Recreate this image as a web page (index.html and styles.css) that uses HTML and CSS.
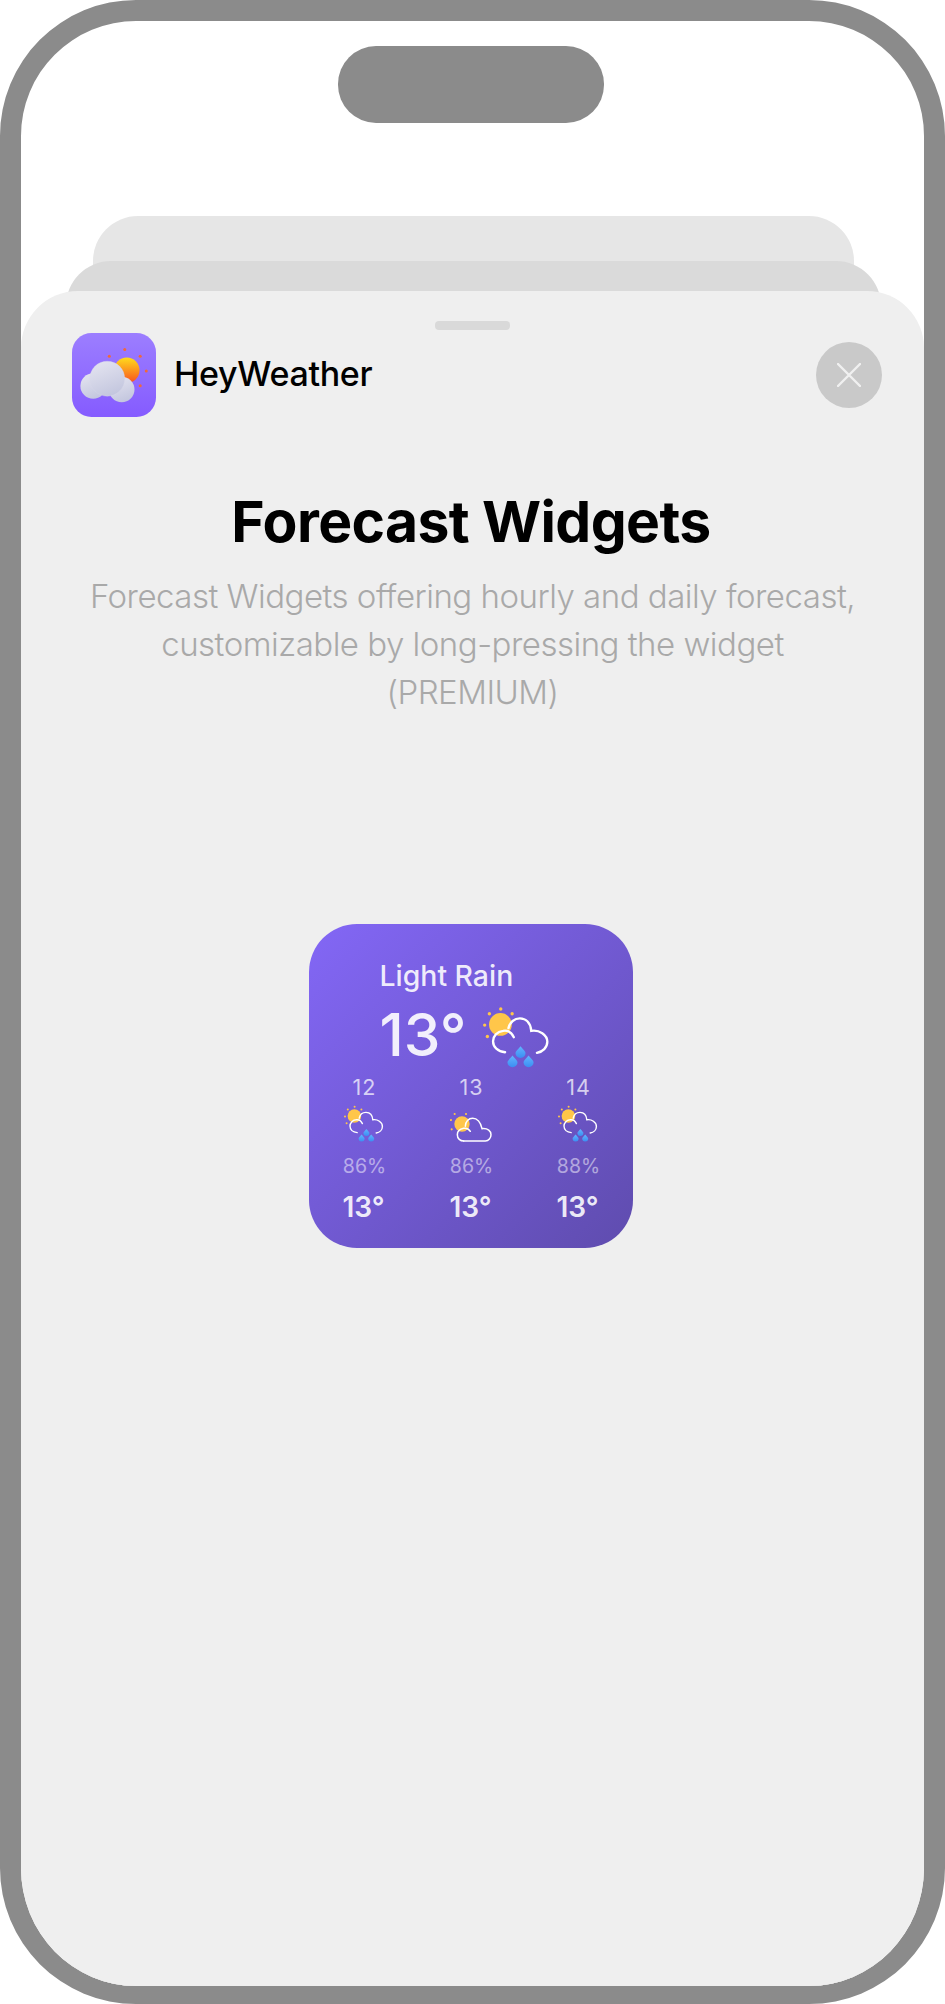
FILE: index.html
```html
<!DOCTYPE html>
<html lang="en">
<head>
<meta charset="utf-8">
<title>HeyWeather</title>
<link rel="stylesheet" href="styles.css">
</head>
<body>
<svg class="defs" width="0" height="0" aria-hidden="true">
  <defs>
    <linearGradient id="drop" x1="0" y1="0" x2="0" y2="1"><stop offset="0" stop-color="#62b4ff"/><stop offset="1" stop-color="#3b8df2"/></linearGradient>
    <linearGradient id="appbg" x1="0" y1="0" x2="0" y2="1"><stop offset="0" stop-color="#9c7eff"/><stop offset="1" stop-color="#855bff"/></linearGradient>
    <linearGradient id="appsun" x1="0" y1="0" x2="0" y2="1"><stop offset="0" stop-color="#ffdc1c"/><stop offset="1" stop-color="#f9501f"/></linearGradient>
    <linearGradient id="appcloud" x1="0.2" y1="0" x2="0.6" y2="1"><stop offset="0" stop-color="#e4e4f0"/><stop offset="1" stop-color="#c3c6de"/></linearGradient>
    <symbol id="rain" viewBox="40 50 200 185">
      <circle cx="92" cy="105" r="34" fill="#ffc64a"/>
      <g fill="#ffc64a"><circle cx="59" cy="73" r="5"/><circle cx="93" cy="59" r="5"/><circle cx="127" cy="73" r="5"/><circle cx="45" cy="107" r="5"/><circle cx="53" cy="141" r="5"/></g>
      <g fill="none" stroke="#fff" stroke-width="7" stroke-linecap="round">
        <path d="M132 143C125 128 112 122 100 124C82 126 70 140 70 155C70 172 84 186 106 188"/>
        <path d="M116 116C120 98 134 87 150 87C168 87 182 100 184 124C208 120 232 136 232 157C232 174 218 187 201 190"/>
      </g>
      <g fill="url(#drop)">
        <path d="M152 170C160 180 167 186 167 190A15 15 0 0 1 137 190C137 186 144 180 152 170Z"/>
        <path d="M128 198C136 208 143 214 143 218A15 15 0 0 1 113 218C113 214 120 208 128 198Z"/>
        <path d="M176 198C184 208 191 214 191 218A15 15 0 0 1 161 218C161 214 168 208 176 198Z"/>
      </g>
    </symbol>
    <symbol id="cloudy" viewBox="14 32 126 90">
      <circle cx="50" cy="68" r="23" fill="#ffc64a"/>
      <g fill="#ffc64a"><circle cx="28" cy="38" r="3.2"/><circle cx="62" cy="38" r="3.2"/><circle cx="17" cy="56" r="3.2"/><circle cx="19" cy="84" r="3.2"/></g>
      <g fill="none" stroke="#fff" stroke-width="4.5" stroke-linecap="round">
        <path d="M55 119H120C130 119 137 110 137 100C137 90 128 80 110 82C106 63 95 51 82 51C70 51 60 60 60 75"/>
        <path d="M75 90C70 82 62 80 55 81C44 83 36 90 36 100C36 112 45 119 55 119"/>
      </g>
    </symbol>
  </defs>
</svg>
<div class="phone">
  <div class="notch-layer"><div class="notch"></div></div>
  <div class="screen">
    <div class="card-back">
      <div class="card-mid">
        <main class="sheet">
          <div class="handle"></div>
          <header class="app-row">
            <div class="app-id">
              <svg class="app-icon" viewBox="0 0 250 250">
                <rect width="250" height="250" rx="58" fill="url(#appbg)"/>
                <circle cx="163" cy="111" r="38" fill="url(#appsun)"/>
                <g fill="#f0693a"><circle cx="111" cy="69" r="4.5"/><circle cx="157" cy="49" r="4.5"/><circle cx="203" cy="69" r="4.5"/><circle cx="221" cy="113" r="4.5"/><circle cx="203" cy="157" r="4.5"/></g>
                <circle cx="63" cy="158" r="38" fill="url(#appcloud)"/>
                <circle cx="148" cy="168" r="38" fill="url(#appcloud)"/>
                <circle cx="105" cy="136" r="52" fill="url(#appcloud)" stroke="#d9d9ea" stroke-width="1"/>
              </svg>
              <span class="app-name">HeyWeather</span>
            </div>
            <div class="close">
              <svg class="close-x" viewBox="0 0 24 24"><path d="M1 1L23 23M23 1L1 23"/></svg>
            </div>
          </header>
          <h1 class="title">Forecast Widgets</h1>
          <p class="subtitle">Forecast Widgets offering hourly and daily forecast,<br>customizable by long-pressing the widget<br>(PREMIUM)</p>
          <section class="widget">
            <div class="now">
              <div class="cond">Light Rain</div>
              <div class="now-row">
                <span class="now-temp">13°</span>
                <svg class="now-icon"><use href="#rain"/></svg>
              </div>
            </div>
            <div class="hours">
              <div class="hour"><span class="h-label">12</span><svg class="h-icon"><use href="#rain"/></svg><span class="h-pct">86%</span><span class="h-temp">13°</span></div>
              <div class="hour"><span class="h-label">13</span><div class="h-slot"><svg class="h-icon-cloud"><use href="#cloudy"/></svg></div><span class="h-pct">86%</span><span class="h-temp">13°</span></div>
              <div class="hour"><span class="h-label">14</span><svg class="h-icon"><use href="#rain"/></svg><span class="h-pct">88%</span><span class="h-temp">13°</span></div>
            </div>
          </section>
        </main>
      </div>
    </div>
  </div>
</div>
</body>
</html>
```

FILE: styles.css
```css
* { box-sizing: border-box; }
html, body { margin: 0; padding: 0; background: #fff; }
body { width: 945px; height: 2004px; font-family: Inter, "Liberation Sans", sans-serif; }
.defs { position: absolute; }
.phone {
  position: relative;
  width: 945px;
  height: 2004px;
  border-style: solid;
  border-color: #8b8b8b;
  border-width: 21px 21px 18px;
  border-radius: 136px;
  overflow: hidden;
  background: #fff;
}
.notch-layer { position: absolute; top: 25px; left: 0; right: 3px; display: flex; justify-content: center; }
.notch { width: 266px; height: 77px; border-radius: 38px; background: #8b8b8b; }
.screen { height: 100%; padding-top: 195px; display: flex; flex-direction: column; }
.card-back {
  flex: 1;
  margin: 0 70px 0 72px;
  padding-top: 45px;
  background: #e6e6e6;
  border-radius: 45px 45px 0 0;
  display: flex;
  flex-direction: column;
}
.card-mid {
  flex: 1;
  margin: 0 -27px;
  padding-top: 30px;
  background: #dadada;
  border-radius: 45px 45px 0 0;
  display: flex;
  flex-direction: column;
}
.sheet {
  flex: 1;
  margin: 0 -43px 0 -45px;
  padding-top: 30px;
  background: #efefef;
  border-radius: 57px 57px 0 0;
  display: flex;
  flex-direction: column;
  align-items: center;
}
.handle { width: 75px; height: 9px; border-radius: 4px; background: #d9d9d9; margin-left: -1px; }
.app-row {
  align-self: stretch;
  margin-top: 3px;
  padding: 0 42px 0 51px;
  display: flex;
  align-items: center;
  justify-content: space-between;
}
.app-id { display: flex; align-items: center; gap: 18px; }
.app-icon { width: 84px; height: 84px; display: block; }
.app-name { font-size: 34px; line-height: 40px; font-weight: 500; color: #000; letter-spacing: -0.3px; margin-top: -2px; }
.close { width: 66px; height: 66px; border-radius: 50%; background: #c9c9c9; display: flex; align-items: center; justify-content: center; }
.close-x { width: 24px; height: 24px; fill: none; stroke: #f0f0f0; stroke-width: 2.4; stroke-linecap: round; }
.title { margin: 70px 0 0 -3px; font-size: 57px; line-height: 70px; font-weight: 700; color: #000; letter-spacing: -0.6px; }
.subtitle { margin: 15px 0 0; font-size: 33px; line-height: 48px; font-weight: 300; color: #a9a9a9; text-align: center; letter-spacing: -0.5px; }
.widget {
  margin: 208px 0 0 -4px;
  width: 324px;
  height: 324px;
  border-radius: 48px;
  background: linear-gradient(135deg, #8367f6 0%, #5f4cae 100%);
  color: #fff;
  display: flex;
  flex-direction: column;
}
.now { padding: 35px 0 0 71px; }
.cond { font-size: 28.4px; line-height: 34px; font-weight: 500; color: rgba(255,255,255,.88); }
.now-row { margin-top: 13px; display: flex; align-items: flex-start; }
.now-temp { font-size: 58.5px; line-height: 58px; font-weight: 500; color: rgba(255,255,255,.9); }
.now-icon { width: 67px; height: 62px; margin: 0 0 0 17px; display: block; }
.hours { display: grid; grid-template-columns: repeat(3, 107px); justify-content: center; }
.hour { display: flex; flex-direction: column; align-items: center; }
.h-label { font-size: 21.5px; line-height: 24px; font-weight: 400; color: rgba(255,255,255,.72); margin-top: 7px; letter-spacing: 1px; padding-left: 2px; }
.h-icon { width: 40px; height: 37px; margin: 6px 0 0 1px; display: block; }
.h-slot { width: 42px; height: 37px; margin-top: 6px; display: flex; align-items: flex-end; }
.h-icon-cloud { width: 42px; height: 30px; display: block; }
.h-pct { font-size: 19.5px; line-height: 24px; color: rgba(255,255,255,.5); margin-top: 12px; padding-left: 2px; }
.h-temp { font-size: 28px; line-height: 32px; font-weight: 600; color: rgba(255,255,255,.9); margin-top: 13px; }
```
